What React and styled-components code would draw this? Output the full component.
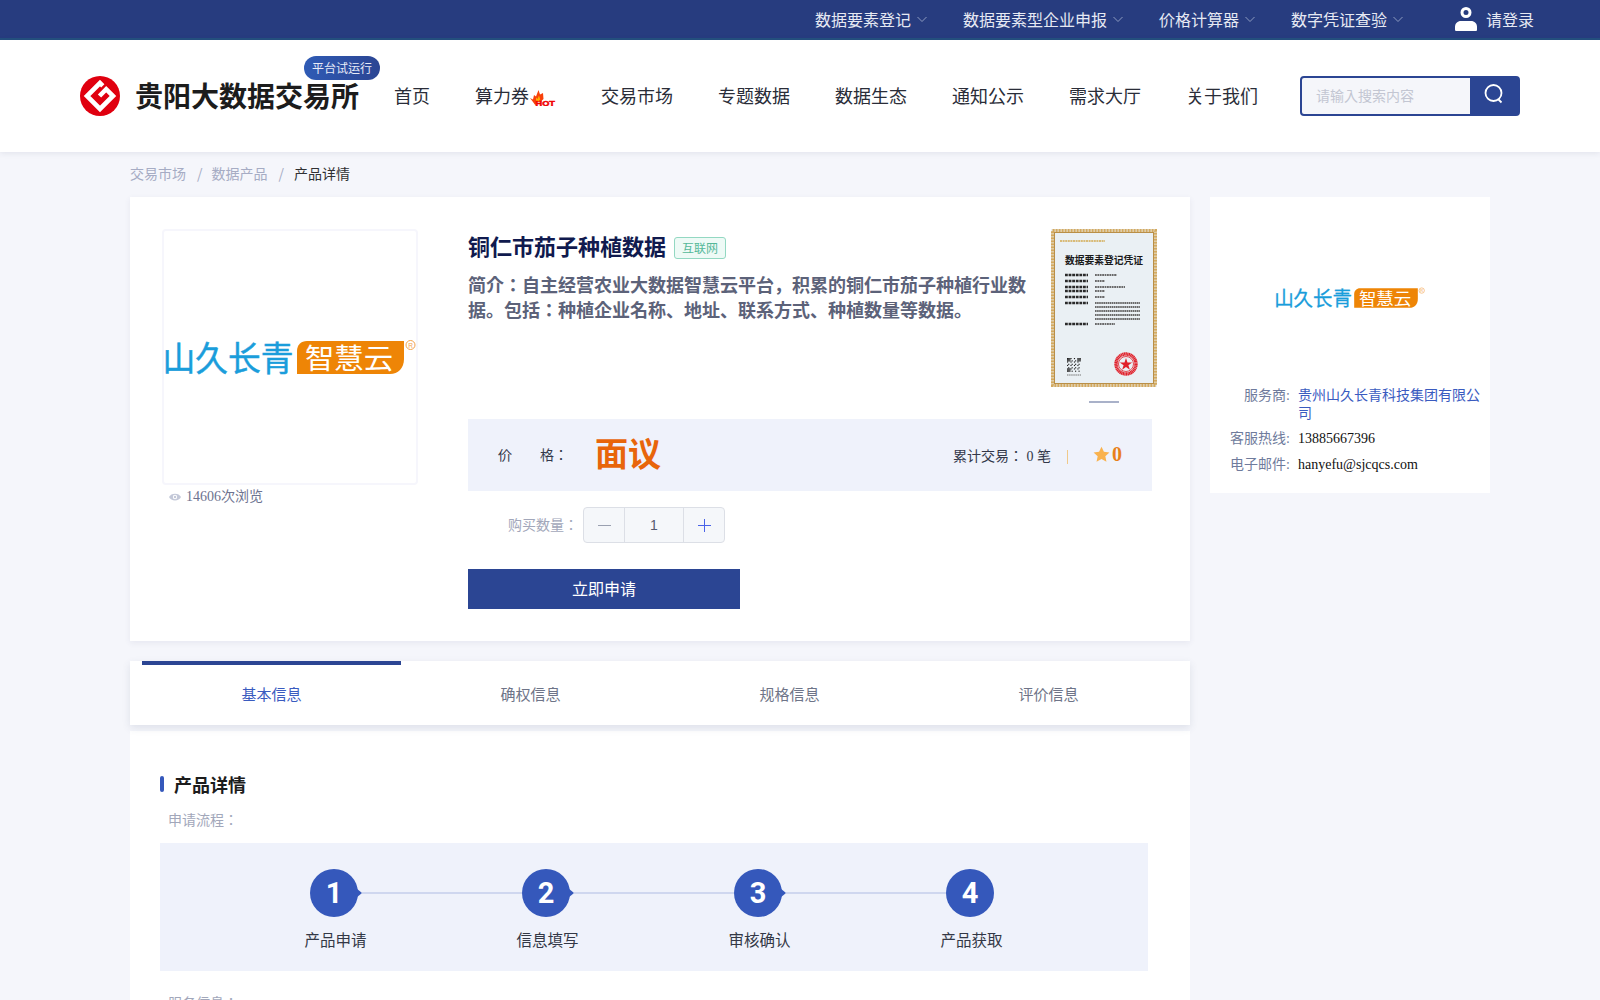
import React from 'react';
import styled, { createGlobalStyle } from 'styled-components';

const SANS = '"Noto Sans CJK JP", "Liberation Sans", sans-serif';
const SERIF = '"Liberation Serif", "Noto Sans CJK JP", serif';

const Global = createGlobalStyle`
  html, body { margin: 0; padding: 0; background: #f5f6fb; }
  body { font-family: ${SERIF}; color: #333; }
  #root { height: 1000px; overflow: hidden; }
  * { box-sizing: border-box; }
  svg { display: block; flex: none; }
`;

const TopBar = styled.div`
  height: 40px; background: #273c7f; border-bottom: 2px solid #24507f;
  display: flex; justify-content: flex-end; align-items: center; padding-right: 66px;
  font-family: ${SANS}; color: #e6e9f3; font-size: 16px;
`;
const TopItem = styled.div`
  display: flex; align-items: center; gap: 6px; margin-left: 36px; white-space: nowrap;
`;
const Login = styled.div`display: flex; align-items: center; gap: 9px; margin-left: 52px;`;

const Header = styled.header`
  height: 112px; background: #fff; box-shadow: 0 1px 6px rgba(40,50,90,.1);
  display: flex; align-items: center; padding-left: 80px; position: relative;
`;
const Brand = styled.div`display: flex; align-items: center; gap: 15px; position: relative; width: 314px; flex: none;`;
const BrandName = styled.div`font: 700 28px ${SANS}; color: #1c1c1c; white-space: nowrap; padding-bottom: 2px;`;
const Badge = styled.span`
  position: absolute; left: 224px; top: -19px; width: 76px; height: 24px; border-radius: 12px;
  background: linear-gradient(90deg, #2f5bb5, #2b4593); color: #e8ecf8;
  font: 12px/23px ${SANS}; text-align: center;
`;
const Nav = styled.nav`display: flex; gap: 45px; font: 18px ${SANS}; color: #2a2d38; padding-bottom: 2px;`;
const NavItem = styled.div`display: flex; align-items: center; white-space: nowrap; width: ${p => p.$w ? p.$w + 'px' : 'auto'};`;
const Search = styled.div`
  margin-left: 42px; width: 220px; height: 40px; border: 2px solid #2b4593; border-radius: 4px;
  display: flex; overflow: hidden; background: #2b4593;
`;
const SearchInput = styled.div`
  width: 168px; background: #f5f6fa; color: #c3c6d2; font: 14px/34px ${SANS}; padding-left: 14px;
`;
const SearchBtn = styled.div`flex: 1; display: flex; align-items: center; justify-content: center; padding-bottom: 4px;`;

const Crumbs = styled.div`
  height: 45px; padding: 0 0 3px 130px; display: flex; align-items: center; gap: 9px;
  font: 14px ${SANS}; color: #a6acc4;
`;
const Slash = styled.span`padding-left: 2px;`;
const CrumbNow = styled.span`color: #303133; margin-left: 1px;`;

const Layout = styled.div`display: flex; gap: 20px; padding-left: 130px; align-items: flex-start;`;
const MainCol = styled.div`width: 1060px; flex: none;`;
const Card = styled.section`background: #fff;`;
const ProductCard = styled(Card)`
  height: 444px; padding: 32px; display: flex; gap: 50px;
  box-shadow: 0 2px 6px rgba(60,70,110,.08);
`;
const Gallery = styled.div`width: 256px; flex: none;`;
const ImageBox = styled.div`
  width: 256px; height: 256px; border: 2px solid #f6f6fc; border-radius: 4px;
  display: flex; align-items: center; justify-content: center;
`;
const Views = styled.div`display: flex; align-items: center; gap: 5px; padding: 2px 0 0 7px; font-size: 14px; color: #6d7390; line-height: 20px;`;

const Detail = styled.div`flex: 1; min-width: 0;`;
const DetailTop = styled.div`display: flex; justify-content: space-between; height: 190px;`;
const Intro = styled.div`width: 566px;`;
const TitleRow = styled.div`display: flex; align-items: center; gap: 8px; height: 36px;`;
const Title = styled.h1`margin: -4px 0 0; font: 700 22px ${SANS}; color: #101a4e; white-space: nowrap;`;
const Tag = styled.span`
  width: 52px; height: 22px; margin-top: 1px; border: 1px solid #93d8c2; background: #eefaf6; border-radius: 3px;
  color: #55b899; font: 12px/20px ${SANS}; text-align: center;
`;
const Desc = styled.p`margin: 7px 0 0; font: 700 18px/24.5px ${SANS}; color: #5c6279;`;
const CertCol = styled.div`width: 106px; flex: none; margin-right: 1px;`;
const CertMark = styled.div`width: 30px; height: 2px; background: #a9b1c9; margin: 14px 0 0 38px;`;

const PriceBand = styled.div`
  width: 684px; height: 72px; background: #eff2fb; display: flex; align-items: center; padding: 0 30px;
  font-size: 14px; color: #33384a;
`;
const PriceLabel = styled.span`width: 97px; white-space: pre; margin-bottom: 3px;`;
const PriceValue = styled.span`font: 700 33px ${SANS}; color: #e8650a; margin-bottom: 6px;`;
const Stats = styled.div`margin-left: auto; display: flex; align-items: center;`;
const Sep = styled.i`width: 1px; height: 14px; background: #f0c98a; margin: 4px 25px 0 16px;`;
const Score = styled.span`display: flex; align-items: center; gap: 2px; font: 700 20px ${SERIF}; color: #e8801a; margin-bottom: 2px;`;

const QtyRow = styled.div`display: flex; align-items: center; margin-top: 16px; padding-left: 40px; gap: 5px; font: 14px ${SANS}; color: #a2a7ba;`;
const QtyLabel = styled.span`padding-bottom: 2px;`;
const Stepper = styled.div`
  display: flex; width: 142px; height: 36px; border: 1px solid #dcdfe6; border-radius: 4px; background: #f5f7fa;
`;
const StepBtn = styled.div`
  width: 41px; display: flex; align-items: center; justify-content: center;
  border-${p => p.$side}: 1px solid #dcdfe6;
`;
const StepValue = styled.div`flex: 1; text-align: center; font: 14px/34px "Liberation Sans", sans-serif; color: #555a70;`;
const Apply = styled.button`
  display: block; margin-top: 26px; width: 272px; height: 40px; border: 0; padding: 0 0 3px; background: #2b4593;
  color: #fff; font: 16px ${SANS};
`;

const Tabs = styled.div`
  margin-top: 20px; height: 64px; background: #fff; padding: 0 12px; display: flex;
  box-shadow: 0 3px 8px rgba(60,70,110,.12); position: relative; z-index: 1;
`;
const Tab = styled.div`
  flex: 1; border-top: 4px solid ${p => p.$on ? '#2b4593' : 'transparent'}; text-align: center;
  font: 15px/58px ${SANS}; color: ${p => p.$on ? '#3a5bbf' : '#6e7488'};
`;
const Content = styled(Card)`margin-top: 6px; height: 400px; padding: 0 42px 0 30px;`;
const SectionTitle = styled.h2`
  margin: 0; padding: 32px 0 0; height: 73px; display: flex; align-items: center; gap: 10px;
  font: 700 18px ${SANS}; color: #1c1c1c;
`;
const TitleBar = styled.i`width: 4px; height: 16px; background: #3558bb; border-radius: 2px;`;
const Sub = styled.div`font: 14px/20px ${SANS}; color: #a2a7ba; padding-left: 8px; margin-top: ${p => p.$mt}px;`;
const Band = styled.div`
  margin-top: 14px; height: 128px; background: #eff2fb; padding: 26px 0 0 150px; display: flex;
`;
const Step = styled.div`width: 212px; display: flex; flex-direction: column; flex: none;`;
const Circle = styled.div`
  width: 48px; height: 48px; border-radius: 50%; background: #3558bb; color: #fff; position: relative;
  font: 700 29px/48px Roboto, sans-serif; text-align: center;
  ${p => p.$line && `
    &::after {
      content: ''; position: absolute; left: 46px; top: 19px; width: 0; height: 0;
      border-left: 6px solid #3558bb; border-top: 5px solid transparent; border-bottom: 5px solid transparent;
    }
    &::before {
      content: ''; position: absolute; left: 52px; top: 23px; width: 160px; height: 2px; background: #cfd7ef;
    }
  `}
`;
const StepLabel = styled.div`
  width: 48px; display: flex; justify-content: center; margin-top: 12px;
  font: 15.5px/20px ${SANS}; color: #333846; white-space: nowrap; padding-left: 3px;
`;

const Side = styled(Card)`width: 280px; flex: none; height: 296px; padding-top: 90px;`;
const SideLogo = styled.div`display: flex; justify-content: center; margin-bottom: 79px;`;
const Row = styled.div`display: flex; gap: 8px; font-size: 14px; padding-right: 10px; margin-bottom: ${p => p.$mb}px; line-height: 17.5px;`;
const RowLabel = styled.span`width: 80px; flex: none; text-align: right; color: #6f7b9c;`;
const RowValue = styled.span`color: ${p => p.$link ? '#3a5bbf' : '#111'};`;

const Chevron = () => (
  <svg width="10" height="10" viewBox="0 0 10 10" fill="none" stroke="#8d9ac0" strokeWidth="1">
    <path d="M.5 3l4.5 4.5L9.500 3" />
  </svg>
);
const UserIcon = () => (
  <svg width="22" height="24" viewBox="0 0 22 24" fill="#fff">
    <path fillRule="evenodd" d="M11 0a5.500 5.500 0 100 11 5.500 5.500 0 000-11zm0 3a2.500 2.500 0 110 5 2.500 2.500 0 010-5z" />
    <path d="M0 22.500V20c0-3.500 2.500-6 6-6h10c3.500 0 6 2.500 6 6v2.500c0 1-.5 1.500-1.500 1.500h-19C.5 24 0 23.500 0 22.500z" />
  </svg>
);
const LogoMark = () => (
  <svg width="40" height="40" viewBox="0 0 40 40">
    <circle cx="20" cy="20" r="20" fill="#e0000f" />
    <path fill="none" stroke="#fff" strokeWidth="4.600" strokeLinejoin="miter" d="M22.800 9.800L20 7 7 20 20 33 33 20 26.200 13.200 19.500 20" />
  </svg>
);
const Hot = () => (
  <svg width="27" height="16" viewBox="0 0 27 16" style={{ marginTop: 5 }}>
    <path fill="#f8410a" d="M1 8l3 1.500L5 5l2 1.500L9.500 0l1.500 4.500L14 3l.5 6-3 3H7.500l-1 3.500-2.500-3.500z" />
    <path fill="#ffb000" d="M7 7.500l1.500 1.500 1.500-3.500 1.200 4-2.200 2H7z" />
    <text x="6.500" y="15.500" fontFamily="Liberation Sans, sans-serif" fontWeight="700" fontSize="8" fill="#f00000" stroke="#f00000" strokeWidth=".5" textLength="19.500" lengthAdjust="spacingAndGlyphs">HOT</text>
  </svg>
);
const SearchIcon = () => (
  <svg width="20" height="20" viewBox="0 0 20 20" fill="none" stroke="#fff" strokeWidth="1.800">
    <ellipse cx="9.500" cy="9" rx="8" ry="8" />
    <path d="M14.500 15.500l3 3" />
  </svg>
);
const Eye = () => (
  <svg width="12" height="10" viewBox="0 0 12 10">
    <path fill="#c3c8d8" d="M0 5c2-4.500 10-4.500 12 0-2 4.500-10 4.500-12 0z" />
    <circle cx="6" cy="5" r="2.200" fill="#fff" />
    <circle cx="6" cy="5" r="1.200" fill="#c3c8d8" />
  </svg>
);
const Star = () => (
  <svg width="17" height="17" viewBox="0 0 24 24" fill="#f9b24e">
    <path d="M12 1l3.400 7.200 7.800 1-5.800 5.400 1.600 7.800L12 18.500l-7 3.900 1.600-7.800L.8 9.200l7.800-1z" />
  </svg>
);
const Minus = () => (
  <svg width="13" height="13" viewBox="0 0 13 13" stroke="#9aa0b0" strokeWidth="1"><path d="M0 6.500h13" /></svg>
);
const Plus = () => (
  <svg width="13" height="13" viewBox="0 0 13 13" stroke="#4a63e8" strokeWidth="1"><path d="M0 6.500h13M6.500 0v13" /></svg>
);

const VendorLogo = ({ width }) => (
  <svg width={width} height={width * 36 / 252} viewBox="0 0 252 36">
    <text x="-1.500" y="31.500" fontFamily='"Noto Sans CJK JP", sans-serif' fontSize="34" fill="#1a9ddb" stroke="#1a9ddb" strokeWidth=".5" textLength="131" lengthAdjust="spacingAndGlyphs">山久长青</text>
    <path fill="#ee8506" d="M143 2h97v18c0 9-6 15-14 15H133V12c0-6 4-10 10-10z" />
    <text x="141" y="30" fontFamily='"Noto Sans CJK JP", sans-serif' fontSize="28" fill="#fff" textLength="88" lengthAdjust="spacingAndGlyphs">智慧云</text>
    <circle cx="246.500" cy="6" r="4.500" fill="none" stroke="#f3a24a" strokeWidth="1" />
    <text x="246.500" y="8.500" textAnchor="middle" fontFamily="Liberation Sans, sans-serif" fontSize="6.500" fill="#f3a24a">R</text>
  </svg>
);

const certRows = [[46, 22], [52, 10], [58, 30], [62, 10], [68, 10]];
const certLines = [74, 78, 82, 86, 90];
const qrCells = [];
for (let i = 0; i < 12; i++) {
  for (let j = 0; j < 12; j++) {
    if ((i * 7 + j * 5 + i * j) % 3 === 0 || (i < 3 && j < 3) || (i < 3 && j > 8) || (i > 8 && j < 3)) qrCells.push([i, j]);
  }
}

const Certificate = () => (
  <svg width="106" height="158" viewBox="0 0 106 158">
    <rect x="0" y="0" width="106" height="158" fill="#eaf0f4" />
    <rect x="1.500" y="1.500" width="103" height="155" fill="none" stroke="#d3a95f" strokeWidth="3" strokeDasharray="2.200 .8" />
    <rect x="3.500" y="3.500" width="99" height="151" fill="none" stroke="#b98f48" strokeWidth="1" />
    <line x1="9" y1="12" x2="54" y2="12" stroke="#d2a94f" strokeWidth="1.500" strokeDasharray="2 .6" />
    <text x="53" y="34.500" textAnchor="middle" fontFamily='"Noto Sans CJK JP", sans-serif' fontWeight="700" fontSize="10" fill="#1a1a1a" textLength="78" lengthAdjust="spacingAndGlyphs">数据要素登记凭证</text>
    {certRows.map(([y, w]) => (
      <g key={y}>
        <line x1="14" y1={y} x2="37" y2={y} stroke="#2a2a2a" strokeWidth="2.600" strokeDasharray="2.800 .8" />
        <line x1="44" y1={y} x2={44 + w} y2={y} stroke="#6a6a6a" strokeWidth="2" strokeDasharray="1.800 .6" />
      </g>
    ))}
    <line x1="14" y1="74" x2="37" y2="74" stroke="#2a2a2a" strokeWidth="2.600" strokeDasharray="2.800 .8" />
    {certLines.map(y => <line key={y} x1="44" y1={y} x2="89" y2={y} stroke="#6a6a6a" strokeWidth="1.800" strokeDasharray="1.600 .5" />)}
    <line x1="14" y1="95" x2="37" y2="95" stroke="#2a2a2a" strokeWidth="2.600" strokeDasharray="2.800 .8" />
    <line x1="44" y1="95" x2="64" y2="95" stroke="#6a6a6a" strokeWidth="2" strokeDasharray="1.800 .6" />
    {qrCells.map(([i, j]) => <rect key={`${i}-${j}`} x={16 + j * 1.15} y={129 + i * 1.15} width="1.150" height="1.150" fill="#222" />)}
    <line x1="16" y1="146" x2="30" y2="146" stroke="#777" strokeWidth="1.200" strokeDasharray="1.500 .6" />
    <circle cx="75" cy="135" r="10" fill="none" stroke="#e0202a" strokeWidth="3.400" strokeDasharray="1.300 .3" />
    <circle cx="75" cy="135" r="7.500" fill="none" stroke="#e0202a" strokeWidth=".8" />
    <path fill="#e0202a" d="M75 129l1.500 4.500h4.700l-3.800 2.800 1.500 4.500-3.900-2.800-3.900 2.800 1.500-4.500-3.800-2.800h4.700z" />
  </svg>
);

const topItems = ['数据要素登记', '数据要素型企业申报', '价格计算器', '数字凭证查验'];
const navItems = ['交易市场', '专题数据', '数据生态', '通知公示', '需求大厅', '关于我们'];
const steps = ['产品申请', '信息填写', '审核确认', '产品获取'];

export default function App() {
  return (
    <>
      <Global />
      <TopBar>
        {topItems.map(t => (
          <TopItem key={t}>{t}<Chevron /></TopItem>
        ))}
        <Login><UserIcon />请登录</Login>
      </TopBar>
      <Header>
        <Brand>
          <LogoMark />
          <BrandName>贵阳大数据交易所</BrandName>
          <Badge>平台试运行</Badge>
        </Brand>
        <Nav>
          <NavItem>首页</NavItem>
          <NavItem $w={81}>算力券<Hot /></NavItem>
          {navItems.map(t => <NavItem key={t}>{t}</NavItem>)}
        </Nav>
        <Search>
          <SearchInput>请输入搜索内容</SearchInput>
          <SearchBtn><SearchIcon /></SearchBtn>
        </Search>
      </Header>
      <Crumbs>
        <span>交易市场</span><Slash>/</Slash><span>数据产品</span><Slash>/</Slash><CrumbNow>产品详情</CrumbNow>
      </Crumbs>
      <Layout>
        <MainCol>
          <ProductCard>
            <Gallery>
              <ImageBox><VendorLogo width={252} /></ImageBox>
              <Views><Eye />14606次浏览</Views>
            </Gallery>
            <Detail>
              <DetailTop>
                <Intro>
                  <TitleRow>
                    <Title>铜仁市茄子种植数据</Title>
                    <Tag>互联网</Tag>
                  </TitleRow>
                  <Desc>简介：自主经营农业大数据智慧云平台，积累的铜仁市茄子种植行业数据。包括：种植企业名称、地址、联系方式、种植数量等数据。</Desc>
                </Intro>
                <CertCol>
                  <Certificate />
                  <CertMark />
                </CertCol>
              </DetailTop>
              <PriceBand>
                <PriceLabel>{'价        格：'}</PriceLabel>
                <PriceValue>面议</PriceValue>
                <Stats>
                  累计交易： 0 笔
                  <Sep />
                  <Score><Star />0</Score>
                </Stats>
              </PriceBand>
              <QtyRow>
                <QtyLabel>购买数量：</QtyLabel>
                <Stepper>
                  <StepBtn $side="right"><Minus /></StepBtn>
                  <StepValue>1</StepValue>
                  <StepBtn $side="left"><Plus /></StepBtn>
                </Stepper>
              </QtyRow>
              <Apply>立即申请</Apply>
            </Detail>
          </ProductCard>
          <Tabs>
            <Tab $on>基本信息</Tab>
            <Tab>确权信息</Tab>
            <Tab>规格信息</Tab>
            <Tab>评价信息</Tab>
          </Tabs>
          <Content>
            <SectionTitle><TitleBar />产品详情</SectionTitle>
            <Sub $mt={5}>申请流程：</Sub>
            <Band>
              {steps.map((s, i) => (
                <Step key={s}>
                  <Circle $line={i < 3}>{i + 1}</Circle>
                  <StepLabel>{s}</StepLabel>
                </Step>
              ))}
            </Band>
            <Sub $mt={21}>服务信息：</Sub>
          </Content>
        </MainCol>
        <Side>
          <SideLogo><VendorLogo width={150} /></SideLogo>
          <Row $mb={8}><RowLabel>服务商:</RowLabel><RowValue $link>贵州山久长青科技集团有限公司</RowValue></Row>
          <Row $mb={8}><RowLabel>客服热线:</RowLabel><RowValue>13885667396</RowValue></Row>
          <Row $mb={0}><RowLabel>电子邮件:</RowLabel><RowValue>hanyefu@sjcqcs.com</RowValue></Row>
        </Side>
      </Layout>
    </>
  );
}
